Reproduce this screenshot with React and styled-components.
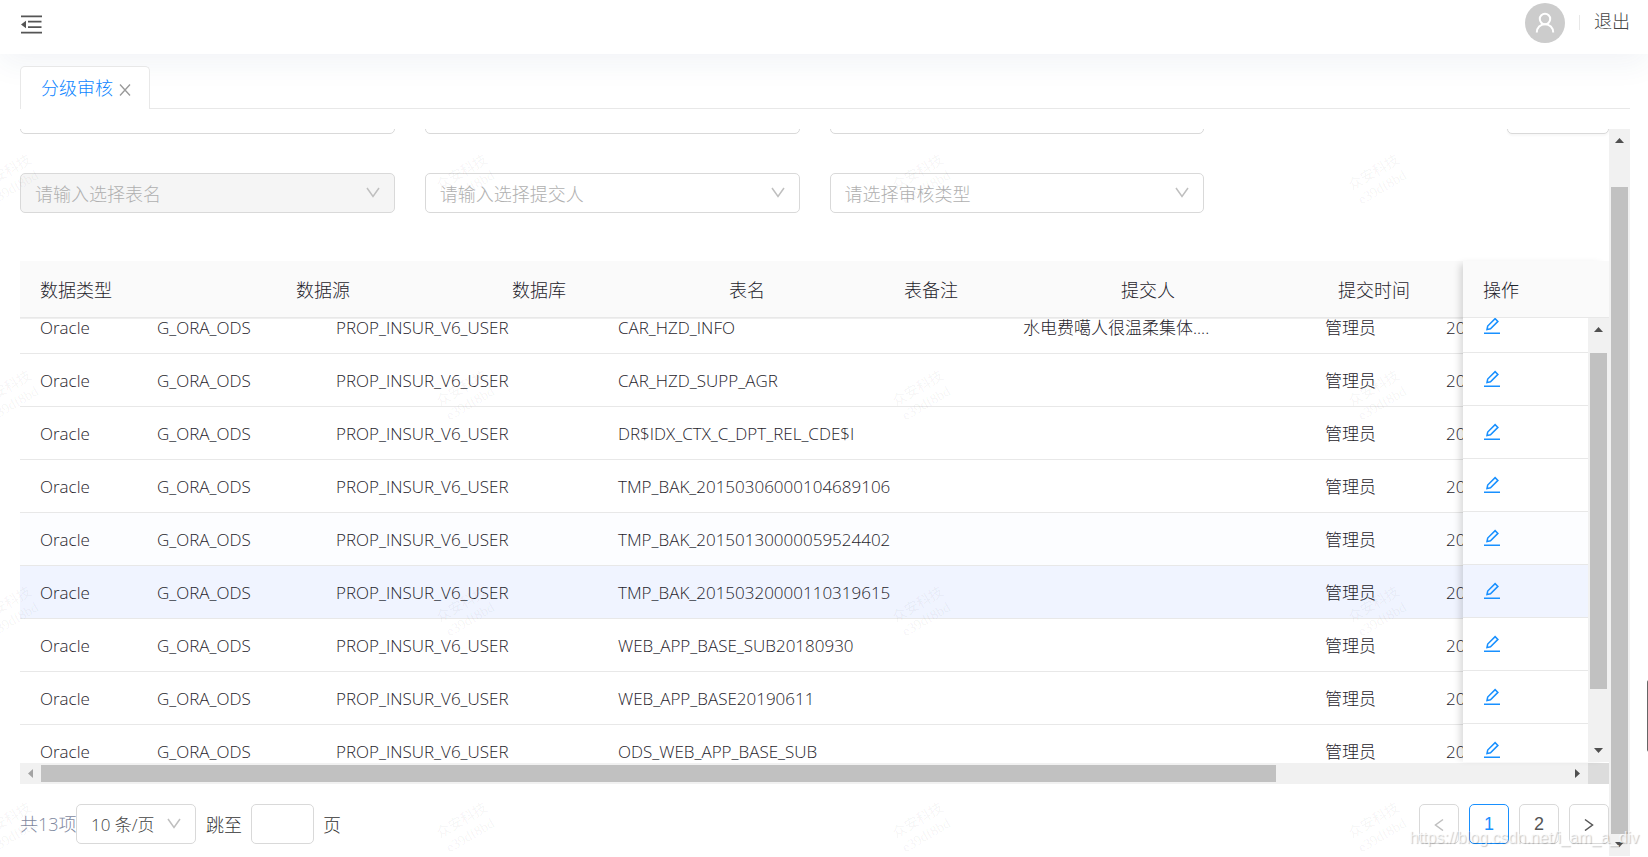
import React from 'react';
import styled, { createGlobalStyle, css } from 'styled-components';

const GlobalStyle = createGlobalStyle`
  *, *::before, *::after { box-sizing: border-box; }
  body {
    margin: 0;
    background: #fff;
    color: #1f242c;
    font: 300 17px/26px "Open Sans", "Noto Sans CJK SC", sans-serif;
    overflow: hidden;
  }
  button, input, select { font: inherit; color: inherit; }
`;

const Page = styled.div`
  position: relative;
  display: flex;
  flex-direction: column;
  height: 100vh;
  padding-bottom: 1px;
  overflow: hidden;
`;

const Header = styled.header`
  display: flex;
  align-items: center;
  justify-content: space-between;
  flex: none;
  height: 54px;
  padding: 0 18px 10px 20px;
  background: #fff;
  box-shadow: 0 10px 30px rgba(31, 73, 125, 0.06);
`;

const IconButton = styled.button`
  display: flex;
  padding: 5px 0 0;
  border: 0;
  background: none;
  color: #555;
`;

const UserBox = styled.div`
  display: flex;
  align-items: center;
  gap: 14px;
`;

const Avatar = styled.span`
  display: flex;
  align-items: center;
  justify-content: center;
  width: 40px;
  height: 40px;
  margin-top: 2px;
  border-radius: 50%;
  background: #ccc;
  color: #fff;
`;

const Divider = styled.span`
  width: 1px;
  height: 15px;
  background: #e8e8e8;
`;

const Logout = styled.a`
  padding-bottom: 2px;
  color: #444;
  font-size: 18px;
  text-decoration: none;
`;

const TabBar = styled.nav`
  display: flex;
  flex: none;
  height: 43px;
  margin: 12px 18px 20px 20px;
`;

const Tab = styled.div`
  display: flex;
  align-items: center;
  gap: 6px;
  width: 130px;
  padding: 0 18px 0 20px;
  border: 1px solid #e8e8e8;
  border-bottom: 0;
  border-radius: 5px 5px 0 0;
  background: #fff;
`;

const TabLink = styled.a`
  color: #0f86ff;
  font-size: 18px;
  text-decoration: none;
  white-space: nowrap;
`;

const CloseButton = styled.button`
  display: flex;
  padding: 4px 0 0;
  border: 0;
  background: none;
  color: #999;
`;

const TabRule = styled.div`
  flex: 1;
  border-bottom: 1px solid #e8e8e8;
`;

const ScrollArea = styled.main`
  display: flex;
  flex: 1;
  min-height: 0;
  margin: 0 18px 0 20px;
  overflow: hidden;
`;

const Content = styled.div`
  flex: 1;
  min-width: 0;
  margin-top: -35px;
`;

const Filters = styled.form`
  display: grid;
  grid-template-columns: repeat(4, minmax(0, 1fr));
  gap: 39px 30px;
  margin-bottom: 48px;
`;

const SelectBox = styled.label`
  position: relative;
  display: block;
  width: ${(p) => p.$width || 'auto'};
`;

const Select = styled.select`
  appearance: none;
  display: block;
  width: 100%;
  height: 40px;
  padding: 2px 14px 0;
  border: 1px solid #d9d9d9;
  border-radius: 5px;
  outline: 0;
  background: #fff;
  color: ${(p) => (p.$filled ? '#444' : '#b0b0b0')};
  font-size: ${(p) => (p.$filled ? 17 : 18)}px;
  opacity: 1;
  &:disabled { background: #f5f5f5; opacity: 1; }
`;

const SelectArrow = styled.svg`
  position: absolute;
  top: 14px;
  right: 15px;
  width: 14px;
  height: 11px;
  color: #bfbfbf;
  pointer-events: none;
`;

const ActionButton = styled.button`
  justify-self: end;
  width: 102px;
  height: 40px;
  border: 1px solid #d9d9d9;
  border-radius: 5px;
  background: #fff;
  box-shadow: 0 2px 2px rgba(0, 0, 0, 0.03);
`;

const TablePanel = styled.section`
  position: relative;
`;

const tableBase = css`
  border-collapse: separate;
  border-spacing: 0;
  table-layout: fixed;
  th, td {
    padding: 2px 0 0 20px;
    text-align: left;
    font-weight: 300;
    white-space: nowrap;
  }
`;

const HeadClip = styled.div`
  overflow: hidden;
  background: #fafafa;
  border-bottom: 1px solid #efefef;
`;

const HeadTable = styled.table`
  ${tableBase}
  width: ${(p) => p.$width}px;
  th {
    height: 57px;
    border-bottom: 1px solid #e8e8e8;
    background: #fafafa;
    font-size: 18px;
  }
`;

const BodyClip = styled.div`
  height: 444px;
  overflow: hidden;
`;

const BodyTable = styled.table`
  ${tableBase}
  width: ${(p) => p.$width}px;
  margin-top: -18px;
`;

const Row = styled.tr`
  td {
    height: 53px;
    border-bottom: 1px solid #e8e8e8;
    background: ${(p) => p.$bg || '#fff'};
  }
`;

const FixedColumn = styled.aside`
  position: absolute;
  top: 0;
  right: 0;
  width: 146px;
  background: #fafafa;
  border-top-right-radius: 5px;
  box-shadow: -6px 0 7px -3px rgba(0, 0, 0, 0.15);
`;

const FixedBody = styled.div`
  display: flex;
  height: 444px;
`;

const FixedClip = styled.div`
  flex: 1;
  overflow: hidden;
  background: #fff;
`;

const EditButton = styled.button`
  display: flex;
  margin-bottom: 2px;
  padding: 0;
  border: 0;
  background: none;
  color: #1890ff;
`;

const Track = styled.div`
  display: flex;
  flex: none;
  flex-direction: ${(p) => (p.$horizontal ? 'row' : 'column')};
  ${(p) => (p.$horizontal ? 'height: 21px; flex: 1;' : 'width: 21px;')}
  background: #f1f1f1;
`;

const TrackArrow = styled.svg`
  flex: none;
  width: 21px;
  height: 21px;
  color: ${(p) => (p.$muted ? '#a3a3a3' : '#505050')};
`;

const Space = styled.div`
  flex: ${(p) => p.$share} 0 0;
`;

const Thumb = styled.div`
  flex: ${(p) => p.$share} 0 0;
  margin: ${(p) => (p.$horizontal ? '2px 0' : '0 2px')};
  background: #c1c1c1;
`;

const BottomBar = styled.div`
  display: flex;
`;

const Corner = styled.div`
  width: 21px;
  background: #dcdcdc;
`;

const Pagination = styled.footer`
  display: flex;
  align-items: center;
  justify-content: space-between;
  margin-top: 20px;
`;

const PageGroup = styled.div`
  display: flex;
  align-items: center;
  gap: ${(p) => p.$gap || 0}px;
`;

const Total = styled.span`
  width: 56px;
  color: #7f899f;
  font-size: 18px;
  white-space: nowrap;
`;

const JumpLabel = styled.label`
  display: flex;
  align-items: center;
  gap: 9px;
  margin-left: 10px;
  color: #333;
  font-size: 18px;
`;

const JumpText = styled.span`
  padding-top: 2px;
`;

const JumpInput = styled.input`
  width: 63px;
  height: 40px;
  padding: 0 10px;
  border: 1px solid #d9d9d9;
  border-radius: 5px;
`;

const PageButton = styled.button`
  display: flex;
  align-items: center;
  justify-content: center;
  width: 40px;
  height: 40px;
  padding: 0;
  border: 1px solid ${(p) => (p.$active ? '#1890ff' : '#d9d9d9')};
  border-radius: 5px;
  background: #fff;
  color: ${(p) => (p.$active ? '#1890ff' : p.disabled ? '#bfbfbf' : '#555')};
  font-family: "Liberation Sans", sans-serif;
  font-size: 18px;
`;

const Watermarks = styled.div`
  position: absolute;
  top: 72px;
  left: -218px;
  display: grid;
  grid-template-columns: repeat(4, 456px);
  grid-auto-rows: 216px;
  place-items: center;
  color: rgba(0, 0, 0, 0.05);
  font: 400 14px/17px "Liberation Serif", "Noto Sans CJK SC", serif;
  text-align: center;
  pointer-events: none;
`;

const Mark = styled.span`
  transform: rotate(-30deg);
  white-space: pre;
`;

const SiteMark = styled.span`
  position: absolute;
  right: 9px;
  bottom: 8px;
  color: rgba(255, 255, 255, 0.7);
  font: 400 16px/22px "Liberation Sans", sans-serif;
  text-shadow: 1px 1px 1px rgba(0, 0, 0, 0.22);
  pointer-events: none;
`;

const SideHandle = styled.span`
  position: absolute;
  top: 680px;
  right: -4px;
  width: 5px;
  height: 72px;
  border-radius: 5px;
  background: #666;
`;

const MenuFoldIcon = () => (
  <svg width="22" height="20" viewBox="0 0 22 20" fill="currentColor" aria-hidden="true">
    <path d="M1 0.5h21v1.8H1zM8 5.8h13.500v1.8H8zM8 11.300h13.500v1.8H8zM1 16.700h21v1.8H1zM1 9.500l5-3.700v7.400z" />
  </svg>
);

const UserIcon = () => (
  <svg width="20" height="22" viewBox="0 0 20 22" fill="none" stroke="currentColor" strokeWidth="2" aria-hidden="true">
    <circle cx="10" cy="7" r="5.200" />
    <path d="M1.800 20.500c0-5 3.500-8.300 8.200-8.300s8.200 3.300 8.200 8.300" />
  </svg>
);

const CloseIcon = () => (
  <svg width="12" height="12" viewBox="0 0 12 12" fill="none" stroke="currentColor" strokeWidth="1.300" aria-hidden="true">
    <path d="M1 0.500l10 11M11 0.500l-10 11" />
  </svg>
);

const EditIcon = () => (
  <svg width="18" height="18" viewBox="0 0 18 18" fill="none" stroke="currentColor" strokeWidth="1.500" aria-hidden="true">
    <path d="M4 12.500l.7-3.500 7.400-7.400 2.800 2.800-7.400 7.400zM1 16.300h16" />
  </svg>
);

const Chevron = ({ left }) => (
  <svg width="10" height="14" viewBox="0 0 10 14" fill="none" stroke="currentColor" strokeWidth="1.500" aria-hidden="true">
    <path d={left ? 'M9 2.500L1.500 8 9 13.500' : 'M1 2.500L8.500 8 1 13.500'} />
  </svg>
);

const arrowPaths = {
  up: 'M6 14h9l-4.500-5z',
  down: 'M6 7h9l-4.500 5z',
  left: 'M13 6v9l-5-4.500z',
  right: 'M8 6v9l5-4.500z',
};

const Arrow = ({ to, muted }) => (
  <TrackArrow viewBox="0 0 21 21" fill="currentColor" $muted={muted}>
    <path d={arrowPaths[to]} />
  </TrackArrow>
);

const Scrollbar = ({ before, thumb, after, horizontal }) => (
  <Track $horizontal={horizontal} aria-hidden="true">
    <Arrow to={horizontal ? 'left' : 'up'} muted={horizontal} />
    <Space $share={before} />
    <Thumb $share={thumb} $horizontal={horizontal} />
    <Space $share={after} />
    <Arrow to={horizontal ? 'right' : 'down'} />
  </Track>
);

const Dropdown = ({ label, text = '', disabled, filled, width }) => (
  <SelectBox $width={width}>
    <Select aria-label={label} disabled={disabled} $filled={filled} defaultValue="0">
      <option value="0">{text}</option>
    </Select>
    <SelectArrow viewBox="0 0 14 11" fill="none" stroke="currentColor" strokeWidth="1.500" aria-hidden="true">
      <path d="M1 1l6 8.500L13 1" />
    </SelectArrow>
  </SelectBox>
);

const headings = [
  ['数据类型', 256], ['数据源', 216], ['数据库', 217], ['表名', 175],
  ['表备注', 217], ['提交人', 217], ['提交时间', 300],
];
const bodyWidths = [117, 179, 282, 405, 302, 121, 192];

const rows = [
  { name: 'CAR_HZD_INFO', remark: '水电费噶人很温柔集体....' },
  { name: 'CAR_HZD_SUPP_AGR' },
  { name: 'DR$IDX_CTX_C_DPT_REL_CDE$I' },
  { name: 'TMP_BAK_20150306000104689106' },
  { name: 'TMP_BAK_20150130000059524402', bg: '#fcfdff' },
  { name: 'TMP_BAK_20150320000110319615', bg: '#f0f4ff' },
  { name: 'WEB_APP_BASE_SUB20180930' },
  { name: 'WEB_APP_BASE20190611' },
  { name: 'ODS_WEB_APP_BASE_SUB' },
];

export default function App() {
  return (
    <Page>
      <GlobalStyle />
      <Header>
        <IconButton aria-label="收起菜单"><MenuFoldIcon /></IconButton>
        <UserBox>
          <Avatar><UserIcon /></Avatar>
          <Divider />
          <Logout href="#logout">退出</Logout>
        </UserBox>
      </Header>

      <TabBar>
        <Tab>
          <TabLink href="#review">分级审核</TabLink>
          <CloseButton aria-label="关闭"><CloseIcon /></CloseButton>
        </Tab>
        <TabRule />
      </TabBar>

      <ScrollArea>
        <Content>
          <Filters>
            <Dropdown label="数据类型" />
            <Dropdown label="数据源" />
            <Dropdown label="数据库" />
            <ActionButton type="button" aria-label="重置" />
            <Dropdown label="表名" text="请输入选择表名" disabled />
            <Dropdown label="提交人" text="请输入选择提交人" />
            <Dropdown label="审核类型" text="请选择审核类型" />
          </Filters>

          <TablePanel>
            <HeadClip>
              <HeadTable $width={1598}>
                <colgroup>{headings.map(([h, w]) => <col key={h} width={w} />)}</colgroup>
                <thead>
                  <tr>{headings.map(([h]) => <th key={h}>{h}</th>)}</tr>
                </thead>
              </HeadTable>
            </HeadClip>
            <BodyClip>
              <BodyTable $width={1598}>
                <colgroup>{bodyWidths.map((w, i) => <col key={i} width={w} />)}</colgroup>
                <tbody>
                  {rows.map((r) => (
                    <Row key={r.name} $bg={r.bg}>
                      <td>Oracle</td>
                      <td>G_ORA_ODS</td>
                      <td>PROP_INSUR_V6_USER</td>
                      <td>{r.name}</td>
                      <td>{r.remark}</td>
                      <td>管理员</td>
                      <td>20</td>
                    </Row>
                  ))}
                </tbody>
              </BodyTable>
            </BodyClip>
            <FixedColumn>
              <HeadTable $width={146}>
                <thead><tr><th>操作</th></tr></thead>
              </HeadTable>
              <FixedBody>
                <FixedClip>
                  <BodyTable $width={125}>
                    <tbody>
                      {rows.map((r) => (
                        <Row key={r.name} $bg={r.bg}>
                          <td><EditButton aria-label="编辑"><EditIcon /></EditButton></td>
                        </Row>
                      ))}
                    </tbody>
                  </BodyTable>
                </FixedClip>
                <Scrollbar before={14} thumb={336} after={52} />
              </FixedBody>
            </FixedColumn>
            <BottomBar>
              <Scrollbar horizontal before={0} thumb={1235} after={291} />
              <Corner />
            </BottomBar>
          </TablePanel>

          <Pagination>
            <PageGroup>
              <Total>共13项</Total>
              <Dropdown label="每页条数" text="10 条/页" filled width="120px" />
              <JumpLabel>
                <JumpText>跳至</JumpText>
                <JumpInput type="text" />
                <JumpText>页</JumpText>
              </JumpLabel>
            </PageGroup>
            <PageGroup $gap={10}>
              <PageButton disabled aria-label="上一页"><Chevron left /></PageButton>
              <PageButton $active>1</PageButton>
              <PageButton>2</PageButton>
              <PageButton aria-label="下一页"><Chevron /></PageButton>
            </PageGroup>
          </Pagination>
        </Content>
        <Scrollbar before={37} thumb={648} after={1} />
      </ScrollArea>

      <Watermarks aria-hidden="true">
        {Array.from({ length: 16 }, (_, i) => <Mark key={i}>{'众安科技\ne39df8bd'}</Mark>)}
      </Watermarks>
      <SideHandle />
      <SiteMark>https://blog.csdn.net/i_am_a_div</SiteMark>
    </Page>
  );
}
